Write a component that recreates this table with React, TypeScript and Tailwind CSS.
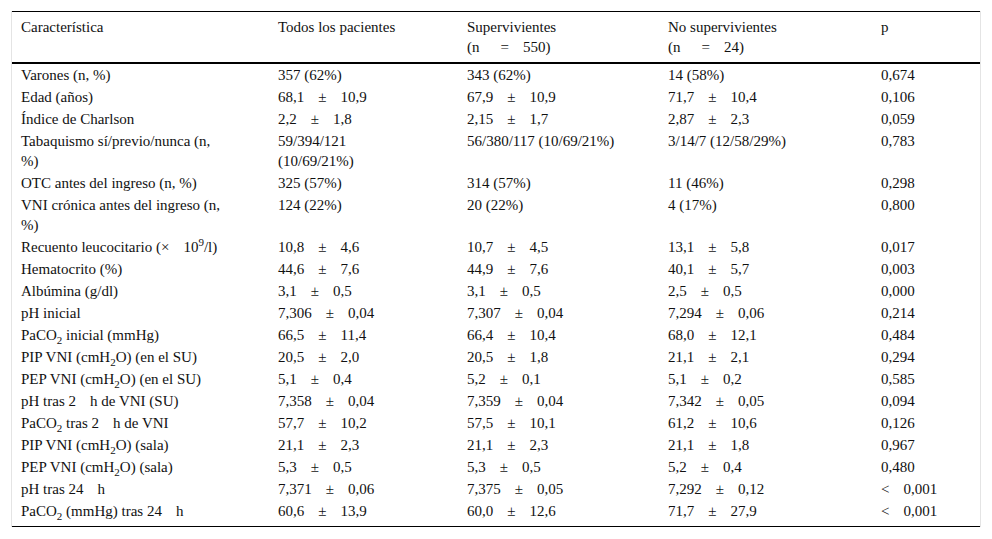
import React from 'react';

const Pm = ({ a, b }: { a: string; b: string }) => (
  <>
    {a}
    <span className="mx-[14px]">±</span>
    {b}
  </>
);

const Gap = () => <span className="inline-block w-[14px]" />;

const Sub = ({ children }: { children: React.ReactNode }) => (
  <sub className="relative top-[4px] align-baseline text-[11px] leading-none">{children}</sub>
);

const N = ({ n }: { n: string }) => (
  <>
    (n<span className="ml-[21px] mr-[14px]">=</span>
    {n})
  </>
);

type Row = [React.ReactNode, React.ReactNode, React.ReactNode, React.ReactNode, React.ReactNode];

const rows: Row[] = [
  ['Varones (n, %)', '357 (62%)', '343 (62%)', '14 (58%)', '0,674'],
  ['Edad (años)', <Pm a="68,1" b="10,9" />, <Pm a="67,9" b="10,9" />, <Pm a="71,7" b="10,4" />, '0,106'],
  ['Índice de Charlson', <Pm a="2,2" b="1,8" />, <Pm a="2,15" b="1,7" />, <Pm a="2,87" b="2,3" />, '0,059'],
  [
    <>Tabaquismo sí/previo/nunca (n,<br />%)</>,
    <>59/394/121<br />(10/69/21%)</>,
    '56/380/117 (10/69/21%)',
    '3/14/7 (12/58/29%)',
    '0,783',
  ],
  ['OTC antes del ingreso (n, %)', '325 (57%)', '314 (57%)', '11 (46%)', '0,298'],
  [<>VNI crónica antes del ingreso (n,<br />%)</>, '124 (22%)', '20 (22%)', '4 (17%)', '0,800'],
  [
    <>
      Recuento leucocitario (×<Gap />10
      <sup className="relative top-[-6px] align-baseline text-[11px] leading-none">9</sup>/l)
    </>,
    <Pm a="10,8" b="4,6" />,
    <Pm a="10,7" b="4,5" />,
    <Pm a="13,1" b="5,8" />,
    '0,017',
  ],
  ['Hematocrito (%)', <Pm a="44,6" b="7,6" />, <Pm a="44,9" b="7,6" />, <Pm a="40,1" b="5,7" />, '0,003'],
  ['Albúmina (g/dl)', <Pm a="3,1" b="0,5" />, <Pm a="3,1" b="0,5" />, <Pm a="2,5" b="0,5" />, '0,000'],
  ['pH inicial', <Pm a="7,306" b="0,04" />, <Pm a="7,307" b="0,04" />, <Pm a="7,294" b="0,06" />, '0,214'],
  [
    <>PaCO<Sub>2</Sub> inicial (mmHg)</>,
    <Pm a="66,5" b="11,4" />,
    <Pm a="66,4" b="10,4" />,
    <Pm a="68,0" b="12,1" />,
    '0,484',
  ],
  [
    <>PIP VNI (cmH<Sub>2</Sub>O) (en el SU)</>,
    <Pm a="20,5" b="2,0" />,
    <Pm a="20,5" b="1,8" />,
    <Pm a="21,1" b="2,1" />,
    '0,294',
  ],
  [
    <>PEP VNI (cmH<Sub>2</Sub>O) (en el SU)</>,
    <Pm a="5,1" b="0,4" />,
    <Pm a="5,2" b="0,1" />,
    <Pm a="5,1" b="0,2" />,
    '0,585',
  ],
  [
    <>pH tras 2<Gap />h de VNI (SU)</>,
    <Pm a="7,358" b="0,04" />,
    <Pm a="7,359" b="0,04" />,
    <Pm a="7,342" b="0,05" />,
    '0,094',
  ],
  [
    <>PaCO<Sub>2</Sub> tras 2<Gap />h de VNI</>,
    <Pm a="57,7" b="10,2" />,
    <Pm a="57,5" b="10,1" />,
    <Pm a="61,2" b="10,6" />,
    '0,126',
  ],
  [
    <>PIP VNI (cmH<Sub>2</Sub>O) (sala)</>,
    <Pm a="21,1" b="2,3" />,
    <Pm a="21,1" b="2,3" />,
    <Pm a="21,1" b="1,8" />,
    '0,967',
  ],
  [
    <>PEP VNI (cmH<Sub>2</Sub>O) (sala)</>,
    <Pm a="5,3" b="0,5" />,
    <Pm a="5,3" b="0,5" />,
    <Pm a="5,2" b="0,4" />,
    '0,480',
  ],
  [
    <>pH tras 24<Gap />h</>,
    <Pm a="7,371" b="0,06" />,
    <Pm a="7,375" b="0,05" />,
    <Pm a="7,292" b="0,12" />,
    <>&lt;<Gap />0,001</>,
  ],
  [
    <>PaCO<Sub>2</Sub> (mmHg) tras 24<Gap />h</>,
    <Pm a="60,6" b="13,9" />,
    <Pm a="60,0" b="12,6" />,
    <Pm a="71,7" b="27,9" />,
    <>&lt;<Gap />0,001</>,
  ],
];

export default function App() {
  return (
    <div className="min-h-screen bg-white pt-[11px] text-[15px] leading-[20px] text-[#111] [font-family:'Liberation_Serif','Times_New_Roman',serif]">
      <div className="mx-[11px] w-[970px] border-x border-[#e4e4e4]">
        <table className="w-full table-fixed border-collapse">
          <colgroup>
            <col className="w-[256px]" />
            <col className="w-[189px]" />
            <col className="w-[201px]" />
            <col className="w-[213px]" />
            <col />
          </colgroup>
          <thead>
            <tr className="border-t border-b-2 border-t-black border-b-black align-top text-left">
              <th className="py-[5px] pl-[9px] font-normal">Característica</th>
              <th className="py-[5px] pl-[10px] font-normal">Todos los pacientes</th>
              <th className="py-[5px] pl-[10px] font-normal">
                Supervivientes
                <br />
                <N n="550" />
              </th>
              <th className="py-[5px] pl-[10px] font-normal">
                No supervivientes
                <br />
                <N n="24" />
              </th>
              <th className="py-[5px] pl-[10px] font-normal">p</th>
            </tr>
          </thead>
          <tbody className="border-b border-black">
            {rows.map((r, i) => (
              <tr key={i} className="align-top">
                {r.map((c, j) => (
                  <td
                    key={j}
                    className={`${j === 0 ? 'pl-[9px]' : 'pl-[10px]'} ${
                      i === rows.length - 1 ? 'pt-px pb-[5px]' : 'py-px'
                    }`}
                  >
                    {c}
                  </td>
                ))}
              </tr>
            ))}
          </tbody>
        </table>
      </div>
    </div>
  );
}
